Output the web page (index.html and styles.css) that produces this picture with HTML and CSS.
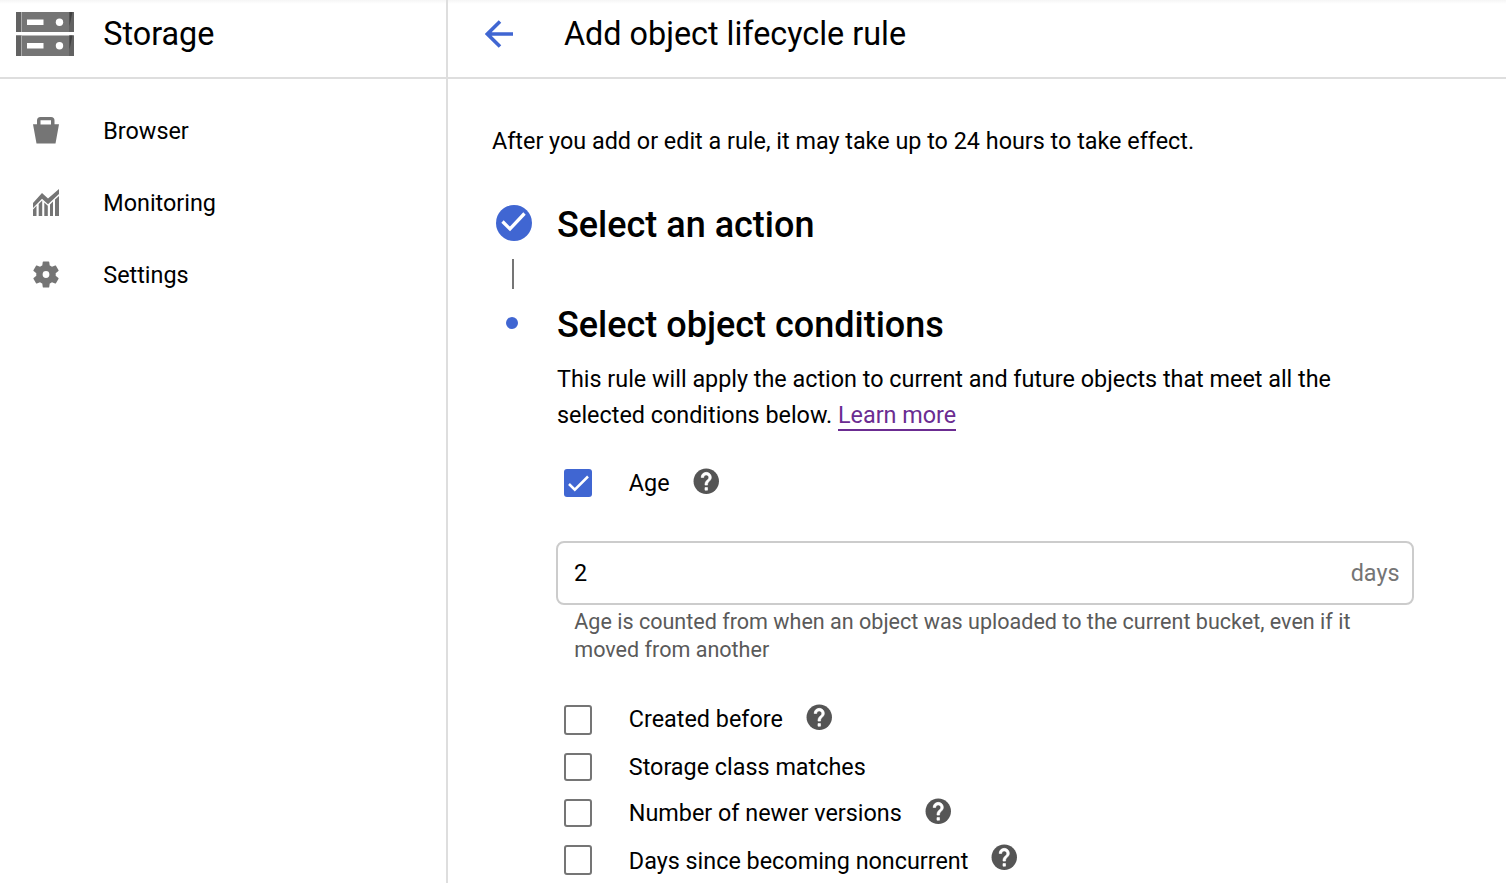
FILE: index.html
```html
<!DOCTYPE html>
<html lang="en">
<head>
<meta charset="utf-8">
<title>Add object lifecycle rule</title>
<link rel="stylesheet" href="styles.css">
</head>
<body>
<svg width="0" height="0" class="defs">
  <symbol id="help" viewBox="0 0 24 24"><circle cx="12" cy="12" r="10"/><path fill="#fff" stroke="#fff" stroke-width=".5" d="M13 19h-2v-2h2v2zm2.07-7.75l-.9.92C13.45 12.9 13 13.5 13 15h-2v-.5c0-1.1.45-2.1 1.17-2.83l1.24-1.26c.37-.36.59-.86.59-1.41 0-1.1-.9-2-2-2s-2 .9-2 2H8c0-2.21 1.79-4 4-4s4 1.79 4 4c0 .88-.36 1.68-.93 2.25z"/></symbol>
</svg>
<div class="app">
  <aside class="sidebar">
    <div class="bar product">
      <svg class="product-icon" viewBox="0 0 58 44">
        <path fill="#757575" d="M0 0h58v20H0zM0 23.500h58V44H0z"/>
        <path fill="#626262" d="M0 0h5v20H0zM0 23.500h5V44H0zM53 0h5v20h-5zM53 23.500h5V44h-5z"/>
        <path fill="#424242" d="M53.500 0h3l-3 14zM53.500 23.500h3l-3 14z"/>
        <path fill="#aaa" d="M5 0h1v20H5zM5 23.500h1V44H5z"/>
        <path fill="#fff" d="M11 7.500h16.500V13H11zM11 31h16.500v5.500H11z"/>
        <circle fill="#fff" cx="43.500" cy="10.300" r="3.700"/><circle fill="#fff" cx="43.500" cy="33.700" r="3.700"/>
      </svg>
      <span class="title">Storage</span>
    </div>
    <nav class="nav">
      <a class="nav-item"><svg class="nav-icon" viewBox="0 0 26 27"><path fill-rule="evenodd" d="M0 7.200h4V3.500Q4 0 7.500 0h10.500Q21.500 0 21.500 3.500v3.700H26L22.500 26.500h-19zM7.500 3.200v4.300H18V3.200z"/></svg>Browser</a>
      <a class="nav-item"><svg class="nav-icon" viewBox="0 0 26 27"><path d="M0 14L9 4l6 5.500L26 0v5L15 15.300 9 9.700 0 19zM0 20.500l3.500-3.700V27H0zM5.700 15l3.500-3.500V27H5.700zM11.300 13.500l3.500 3.300V27h-3.500zM17 15.500l3-3V27h-3zM22 10.500L26 7v20h-4z"/></svg>Monitoring</a>
      <a class="nav-item"><svg class="nav-icon" viewBox="2 2 20 20"><path d="M19.430 12.980c.04-.32.07-.64.07-.98s-.03-.66-.07-.98l2.110-1.650c.19-.15.24-.42.12-.64l-2-3.460c-.12-.22-.39-.3-.61-.22l-2.490 1c-.52-.4-1.080-.73-1.690-.98l-.38-2.650C14.460 2.180 14.250 2 14 2h-4c-.25 0-.46.18-.49.42l-.38 2.650c-.61.25-1.170.59-1.690.98l-2.490-1c-.23-.09-.49 0-.61.22l-2 3.460c-.13.22-.07.49.12.64l2.110 1.650c-.04.32-.07.65-.07.98s.03.66.07.98l-2.110 1.650c-.19.15-.24.42-.12.64l2 3.460c.12.22.39.3.61.22l2.490-1c.52.4 1.080.73 1.690.98l.38 2.650c.03.24.24.42.49.42h4c.25 0 .46-.18.49-.42l.38-2.650c.61-.25 1.170-.59 1.690-.98l2.490 1c.23.09.49 0 .61-.22l2-3.460c.12-.22.07-.49-.12-.64l-2.110-1.650zM12 14.600a2.600 2.600 0 1 1 0-5.200 2.600 2.600 0 0 1 0 5.200z"/></svg>Settings</a>
    </nav>
  </aside>
  <main class="main">
    <header class="bar page-bar">
      <svg class="back" viewBox="0 0 28 28"><path d="M28 14H2M15 1.500L2.300 14 15 26.500" fill="none" stroke="#4066d2" stroke-width="3.600"/></svg>
      <h1 class="title">Add object lifecycle rule</h1>
    </header>
    <div class="content">
      <p class="intro">After you add or edit a rule, it may take up to 24 hours to take effect.</p>
      <section class="step">
        <div class="rail">
          <svg class="done" viewBox="0 0 36 36"><circle cx="18" cy="18" r="18" fill="#4066d2"/><path d="M6.500 16.500l7.500 7.500L28.500 8.500" fill="none" stroke="#fff" stroke-width="3.300"/></svg>
          <span class="connector"></span>
        </div>
        <h2 class="step-title">Select an action</h2>
      </section>
      <section class="step">
        <div class="rail"><span class="dot"></span></div>
        <div class="step-body">
          <h2 class="step-title">Select object conditions</h2>
          <p class="desc">This rule will apply the action to current and future objects that meet all the selected conditions below. <a class="link">Learn more</a></p>
          <div class="option age">
            <span class="check checked"><svg viewBox="0 0 28 28"><path d="M5 15l5.800 5.700L24 7.500" fill="none" stroke="#fff" stroke-width="2.500"/></svg></span>
            <span class="label">Age</span><svg class="help"><use href="#help"/></svg>
          </div>
          <div class="field"><span>2</span><span class="unit">days</span></div>
          <p class="hint">Age is counted from when an object was uploaded to the current bucket, even if it moved from another</p>
          <div class="options">
            <div class="option"><span class="check tall"></span><span class="label">Created before</span><svg class="help"><use href="#help"/></svg></div>
            <div class="option"><span class="check"></span><span class="label">Storage class matches</span></div>
            <div class="option short"><span class="check"></span><span class="label">Number of newer versions</span><svg class="help"><use href="#help"/></svg></div>
            <div class="option last"><span class="check tall"></span><span class="label">Days since becoming noncurrent</span><svg class="help"><use href="#help"/></svg></div>
          </div>
        </div>
      </section>
    </div>
  </main>
</div>
</body>
</html>
```
FILE: styles.css
```css
* { box-sizing: border-box; }
body { margin: 0; background: #fff; color: #000; font: 23.370px/36px Roboto, sans-serif; overflow: hidden; }
h1, h2, p { margin: 0; font-weight: 400; }
svg { display: block; flex: none; }
.defs { position: absolute; }
.app { display: flex; height: 883px; background: linear-gradient(#f5f5f5, #fff 4px); }
.sidebar { width: 448px; flex: none; border-right: 2px solid #dedede; }
.main { flex: 1; min-width: 0; }
.bar { display: flex; align-items: center; height: 79px; padding-bottom: 9px; border-bottom: 2px solid #dedede; }
.title { font-size: 32.350px; line-height: 40px; white-space: nowrap; }
.product { padding-left: 16px; gap: 29.300px; }
.product-icon { width: 58px; height: 44px; }
.page-bar { padding-left: 37px; gap: 51px; }
.back { width: 28px; height: 28px; }
.nav { padding-top: 16px; }
.nav-item { display: flex; align-items: center; height: 72px; padding-left: 33px; gap: 44.300px; }
.nav-icon { width: 26px; height: 27px; margin-top: -2px; fill: #757575; }
.content { padding: 44px 0 0 44px; }
.intro { height: 82px; white-space: nowrap; }
.step { display: flex; min-height: 100px; }
.rail { width: 65px; flex: none; padding-left: 4px; }
.done { width: 36px; height: 36px; }
.connector { display: block; width: 2px; height: 30px; margin: 18px 0 0 16px; background: #757575; }
.dot { display: block; width: 12px; height: 12px; margin: 12px 0 0 10px; border-radius: 50%; background: #4066d2; }
.step-title { font-size: 36px; line-height: 40px; font-weight: 500; }
.step-body { width: 857px; }
.desc { width: 800px; margin-top: 16px; }
.link { color: #6b2c91; border-bottom: 2px solid #6b2c91; }
.option { display: flex; align-items: center; height: 48px; padding-left: 7px; }
.age { margin-top: 26px; }
.check { width: 28px; height: 28px; margin-right: 36.800px; flex: none; border: 2px solid #757575; border-radius: 3px; }
.check.tall { height: 30px; margin-top: 2px; }
.check.checked { border: 0; background: #4066d2; }
.label { white-space: nowrap; }
.help { width: 30.500px; height: 30.500px; margin: -4px 0 0 21px; fill: #555; }
.field { display: flex; align-items: center; justify-content: space-between; height: 64px; margin: 34px 0 0 -1px; padding: 0 12.500px 0 16px; border: 2px solid #ccc; border-radius: 8px; }
.unit { color: #757575; }
.hint { margin-top: 3px; padding-left: 17.300px; width: 810px; color: #5a5a5a; font-size: 21.560px; line-height: 28px; }
.options { margin-top: 31px; }
.option.short { height: 44px; }
.option.last { height: 52px; }
.last .check.tall { margin-top: -2px; }
.last .help { margin-top: -8px; }
```
